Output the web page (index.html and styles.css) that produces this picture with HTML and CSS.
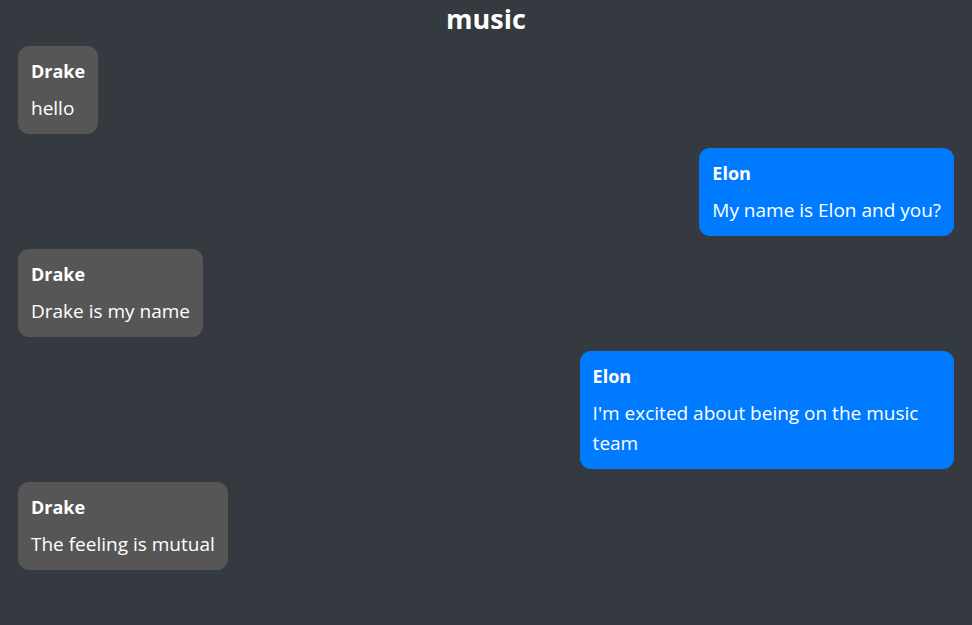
FILE: index.html
```html
<!DOCTYPE html>
<html>
<head>
<meta charset="utf-8">
<link rel="stylesheet" href="styles.css">
</head>
<body>
<h1 class="title">music</h1>
<div class="chat">
  <div class="msg them"><div class="name">Drake</div><div class="text">hello</div></div>
  <div class="msg me"><div class="name">Elon</div><div class="text">My name is Elon and you?</div></div>
  <div class="msg them"><div class="name">Drake</div><div class="text">Drake is my name</div></div>
  <div class="msg me"><div class="name">Elon</div><div class="text">I'm excited about being on the music team</div></div>
  <div class="msg them"><div class="name">Drake</div><div class="text">The feeling is mutual</div></div>
</div>
</body>
</html>
```
FILE: styles.css
```css
html, body { margin: 0; padding: 0; }
body {
  background: #343a40;
  color: #fff;
  font-family: "Open Sans", "Noto Sans", sans-serif;
  height: 625px;
  overflow: hidden;
}
.title {
  margin: 0;
  text-align: center;
  font-size: 27px;
  font-weight: 700;
  line-height: 38px;
  padding-bottom: 8px;
}
.chat {
  display: flex;
  flex-direction: column;
  gap: 13.5px;
  padding: 0 18px;
}
.msg {
  box-sizing: border-box;
  max-width: 40%;
  padding: 12px 13px 11px;
  border-radius: 11px;
  font-size: 19px;
}
.them { align-self: flex-start; background: #575656; }
.me { align-self: flex-end; background: #007bff; }
.name { font-weight: 700; font-size: 18px; line-height: 27px; margin-bottom: 8px; }
.text { line-height: 30px; }
```
